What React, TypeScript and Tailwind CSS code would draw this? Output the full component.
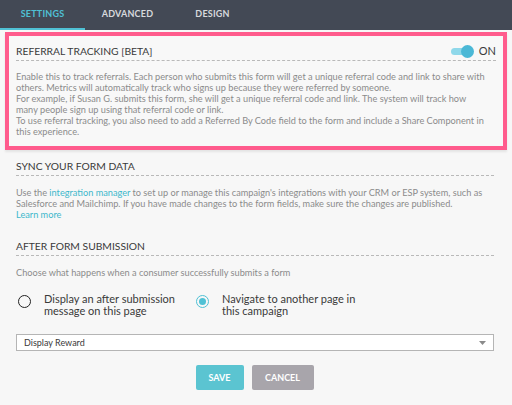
const font = "font-['Lato','Open_Sans',sans-serif]";

function Tab({ label, active }: { label: string; active?: boolean }) {
  return (
    <div
      className={
        "flex h-full w-[85px] items-center justify-center border-b-2 text-[9px] font-bold tracking-[0.2px] " +
        (active ? "border-[#4fc1d5] text-[#4fc1d5]" : "border-transparent text-[#d7d9dd]")
      }
    >
      {label}
    </div>
  );
}

function Heading({ children, right }: { children: React.ReactNode; right?: React.ReactNode }) {
  return (
    <div className="flex items-center justify-between border-b border-dashed border-[#b9b9b9] pb-[2px]">
      <h2 className="text-[10.3px] leading-[14px] text-[#3a3a3a]">{children}</h2>
      {right}
    </div>
  );
}

function Radio({ checked, lines }: { checked?: boolean; lines: string[] }) {
  return (
    <label className="flex items-start gap-[13px]">
      <span
        className={
          "mt-[2px] flex h-[13px] w-[13px] shrink-0 items-center justify-center rounded-full border-[1.5px] " +
          (checked ? "border-[#4fc1d5]" : "border-[#222]")
        }
      >
        {checked && <span className="h-[7px] w-[7px] rounded-full bg-[#4fc1d5]" />}
      </span>
      <span className="text-[11px] leading-[12px] text-[#3a3a3a]">
        {lines[0]}
        <br />
        {lines[1]}
      </span>
    </label>
  );
}

export default function App() {
  return (
    <div className={"h-[405px] w-[512px] overflow-hidden bg-[#f7f7f7] " + font}>
      <nav className="flex h-[30px] bg-[#434955]">
        <Tab label="SETTINGS" active />
        <Tab label="ADVANCED" />
        <Tab label="DESIGN" />
      </nav>

      {/* highlighted referral card */}
      <section className="mx-[5px] mt-[2px] border-4 border-[#ff5c8d] bg-[#f8f8f8] px-[7px] pb-[9px] pt-[8px] shadow-[0_2px_2px_rgba(0,0,0,0.08)]">
        <Heading
          right={
            <div className="flex items-center gap-[7px]">
              <div className="relative h-[7px] w-[21px] rounded-full bg-[#8fd8ea]">
                <span className="absolute right-[-2px] top-[-3px] h-[13px] w-[13px] rounded-full bg-[#4bb8d6]" />
              </div>
              <span className="text-[11px] leading-[14px] text-[#3a3a3a]">ON</span>
            </div>
          }
        >
          REFERRAL TRACKING [BETA]
        </Heading>
        <p className="mt-[10px] whitespace-nowrap text-[9.2px] leading-[11px] text-[#8b8b8b]">
          Enable this to track referrals. Each person who submits this form will get a unique referral code and link to share with
          <br />
          others. Metrics will automatically track who signs up because they were referred by someone.
          <br />
          For example, if Susan G. submits this form, she will get a unique referral code and link. The system will track how
          <br />
          many people sign up using that referral code or link.
          <br />
          To use referral tracking, you also need to add a Referred By Code field to the form and include a Share Component in
          <br />
          this experience.
        </p>
      </section>

      <div className="px-[16px]">
        <div className="mr-[2px] mt-[9px]">
          <Heading>SYNC YOUR FORM DATA</Heading>
        </div>
        <p className="mt-[11px] whitespace-nowrap text-[9.2px] leading-[11px] text-[#8b8b8b]">
          Use the <span className="text-[#3db8cc]">integration manager</span> to set up or manage this campaign's integrations
          with your CRM or ESP system, such as
          <br />
          Salesforce and Mailchimp. If you have made changes to the form fields, make sure the changes are published.
          <br />
          <span className="text-[#3db8cc]">Learn more</span>
        </p>

        <div className="mr-[2px] mt-[19px]">
          <Heading>AFTER FORM SUBMISSION</Heading>
        </div>
        <p className="mt-[11px] text-[9.2px] leading-[11px] text-[#8b8b8b]">
          Choose what happens when a consumer successfully submits a form
        </p>

        <div className="mt-[15px] flex gap-[21px] pl-[2px]">
          <Radio lines={["Display an after submission", "message on this page"]} />
          <Radio checked lines={["Navigate to another page in", "this campaign"]} />
        </div>

        <div className="mr-[2px] mt-[17px] flex h-[17px] items-center justify-between border border-[#b5b5b5] bg-white pl-[7px] pr-[7px]">
          <span className="text-[9px] text-[#3a3a3a]">Display Reward</span>
          <svg width="7" height="4" viewBox="0 0 7 4">
            <path d="M0 0h7L3.5 4z" fill="#8a8a8a" />
          </svg>
        </div>

        <div className="mt-[14px] flex justify-center gap-[8px] pr-[3px]">
          <button className="h-[25px] w-[48px] rounded-[2px] bg-[#5bc4d1] text-[9px] font-bold text-white">SAVE</button>
          <button className="h-[25px] w-[62px] rounded-[2px] bg-[#a8a5ab] text-[9px] font-bold text-white">CANCEL</button>
        </div>
      </div>
    </div>
  );
}
